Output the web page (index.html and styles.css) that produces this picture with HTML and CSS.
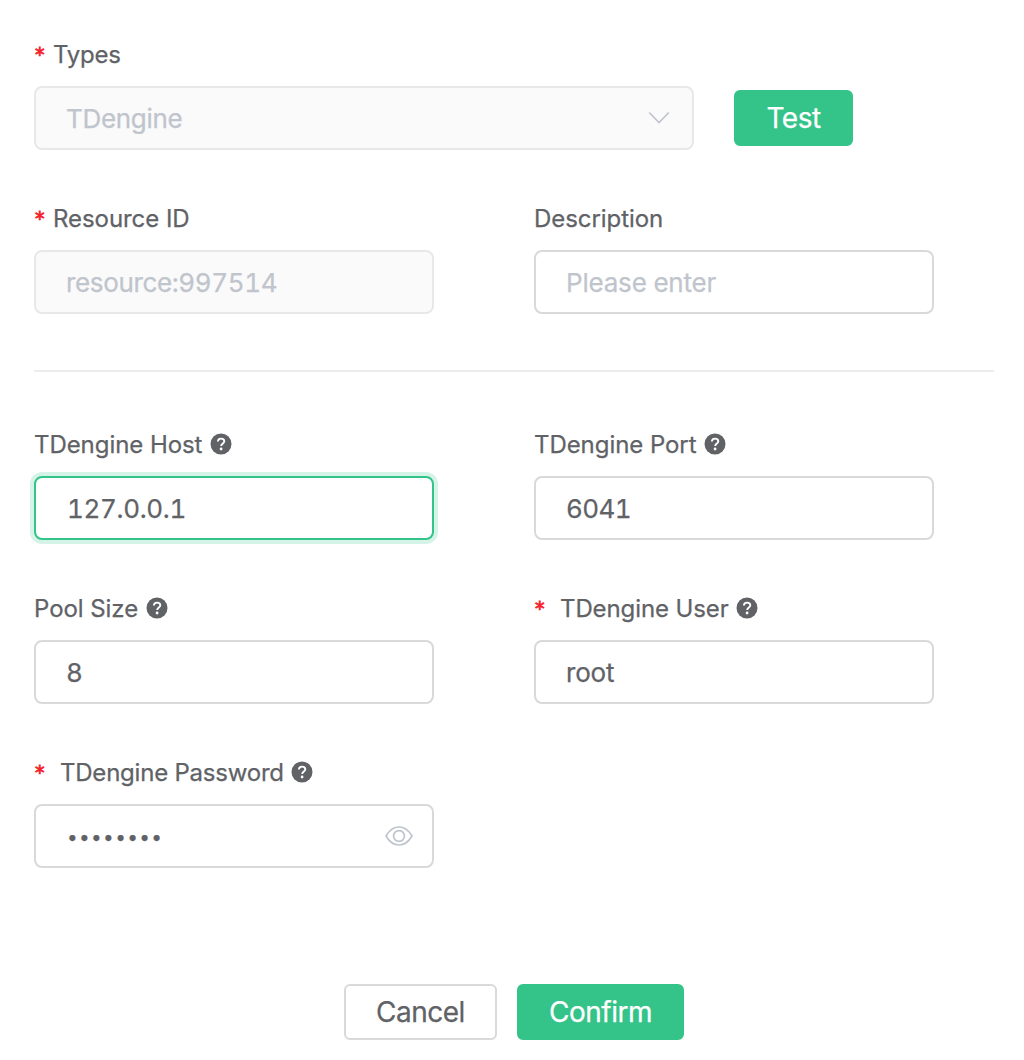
FILE: index.html
```html
<!DOCTYPE html>
<html lang="en">
<head>
<meta charset="utf-8">
<title>Resource</title>
<link rel="stylesheet" href="styles.css">
</head>
<body>
<svg class="sprite" width="0" height="0" aria-hidden="true">
  <symbol id="help" viewBox="0 0 22 22">
    <circle cx="11" cy="11" r="10.5" fill="#606266"/>
    <path d="M7.900 8.600C7.900 6.700 9.300 5.600 11.100 5.600s3.200 1.100 3.200 2.700c0 2.200-3.100 2.200-3.100 4.700" fill="none" stroke="#fff" stroke-width="1.900"/>
    <circle cx="11.100" cy="16" r="1.400" fill="#fff"/>
  </symbol>
</svg>
<form class="form">
  <div class="row">
    <div class="field wide">
      <label class="label"><span class="star">*</span><span class="t-types">Types</span></label>
      <div class="control disabled">
        <input class="input v-type" value="TDengine" disabled>
        <svg class="chevron" width="22" height="14" viewBox="0 0 22 14"><path d="M1.2 1.5 11 11.5 20.8 1.5" fill="none" stroke="#c0c4cc" stroke-width="1.7"/></svg>
      </div>
    </div>
    <button class="btn primary test" type="button">Test</button>
  </div>
  <div class="row">
    <div class="field">
      <label class="label"><span class="star">*</span><span>Resource ID</span></label>
      <div class="control disabled"><input class="input v-id" value="resource:997514" disabled></div>
    </div>
    <div class="field">
      <label class="label"><span>Description</span></label>
      <div class="control"><input class="input" placeholder="Please enter"></div>
    </div>
  </div>
  <hr class="divider">
  <div class="row">
    <div class="field">
      <label class="label"><span>TDengine Host</span><svg class="help"><use href="#help"/></svg></label>
      <div class="control active"><input class="input v-host" value="127.0.0.1"></div>
    </div>
    <div class="field">
      <label class="label"><span>TDengine Port</span><svg class="help"><use href="#help"/></svg></label>
      <div class="control"><input class="input v-port" value="6041"></div>
    </div>
  </div>
  <div class="row">
    <div class="field">
      <label class="label"><span>Pool Size</span><svg class="help"><use href="#help"/></svg></label>
      <div class="control"><input class="input" value="8"></div>
    </div>
    <div class="field">
      <label class="label"><span class="star spaced">*</span><span class="t-user">TDengine User</span><svg class="help"><use href="#help"/></svg></label>
      <div class="control"><input class="input" value="root"></div>
    </div>
  </div>
  <div class="row">
    <div class="field">
      <label class="label"><span class="star spaced">*</span><span class="t-pass">TDengine Password</span><svg class="help"><use href="#help"/></svg></label>
      <div class="control">
        <input class="input v-pass" type="password" value="password">
        <svg class="eye" width="28" height="20" viewBox="0 0 28 20" fill="none" stroke="#c0c4cc" stroke-width="1.7"><path d="M1 10C4.5 4 8.8 1 14 1s9.500 3 13 9c-3.500 6-7.800 9-13 9S4.500 16 1 10Z"/><circle cx="14" cy="10" r="5.400"/></svg>
      </div>
    </div>
  </div>
  <div class="footer">
    <button class="btn cancel" type="button">Cancel</button>
    <button class="btn primary confirm" type="button">Confirm</button>
  </div>
</form>
</body>
</html>
```
FILE: styles.css
```css
* { box-sizing: border-box; }
body {
  margin: 0;
  background: #fff;
  color: #606266;
  font-family: Inter, "Liberation Sans", sans-serif;
  -webkit-text-stroke: 0.25px;
}
.sprite { display: block; }
.form { padding: 22px 30px 0 34px; }
.row { display: flex; gap: 100px; height: 164px; }
.field { width: 400px; }
.wide { width: 660px; }
.row:first-child { gap: 40px; }
.label {
  display: flex;
  align-items: center;
  height: 64px;
  font-size: 24px;
  letter-spacing: -0.06px;
  white-space: nowrap;
}
.t-types { letter-spacing: -0.2px; }
.t-user { letter-spacing: -0.1px; }
.t-pass { letter-spacing: -0.22px; }
.star {
  width: 19px;
  padding: 0 0 1px 1px;
  color: #f5222d;
  font-family: "DejaVu Sans", sans-serif;
  font-size: 19px;
  letter-spacing: 0;
  -webkit-text-stroke: 0.8px;
}
.spaced { width: 26px; }
.help { width: 22px; height: 22px; margin-left: 7.5px; }
.control {
  display: flex;
  align-items: center;
  height: 64px;
  padding: 0 20px 0 30px;
  border: 2px solid #d9d9d9;
  border-radius: 8px;
  background: #fff;
}
.disabled { border-color: #e8e8e8; background: #fafafa; }
.active { border-color: #34c388; box-shadow: 0 0 0 4px #d6f3e7; }
.input {
  flex: 1;
  min-width: 0;
  height: 40px;
  padding: 0;
  border: 0;
  outline: 0;
  background: transparent;
  color: #606266;
  font: 26px Inter, "Liberation Sans", sans-serif;
  font-variant-numeric: tabular-nums;
  letter-spacing: -0.2px;
  -webkit-text-stroke: 0.25px;
}
.disabled .input, .input::placeholder { color: #c0c4cc; opacity: 1; }
.v-type { letter-spacing: -0.3px; }
.disabled .v-id { letter-spacing: -0.36px; }
.v-port { letter-spacing: -0.6px; }
.v-host { padding-left: 1px; letter-spacing: -0.35px; }
.v-pass { padding: 2px 0 0 1px; font-size: 19px; letter-spacing: 1.35px; }
.chevron { margin-right: 2px; }
.eye { margin-right: -1px; }
.btn {
  height: 56px;
  padding: 0;
  border: 2px solid #d9d9d9;
  border-radius: 6px;
  background: #fff;
  color: #606266;
  font: 28px Inter, "Liberation Sans", sans-serif;
  letter-spacing: -0.5px;
  -webkit-text-stroke: 0.25px;
  box-shadow: 0 4px 0 rgba(0, 0, 0, 0.015);
}
.primary { border-color: #34c388; background: #34c388; color: #fff; }
.test { width: 119px; margin-top: 68px; box-shadow: none; }
.cancel { width: 153px; }
.confirm { width: 167px; }
.divider { height: 2px; margin: 20px 0 40px; border: 0; background: #ececec; }
.footer { display: flex; justify-content: center; gap: 20px; padding-top: 80px; }
```
